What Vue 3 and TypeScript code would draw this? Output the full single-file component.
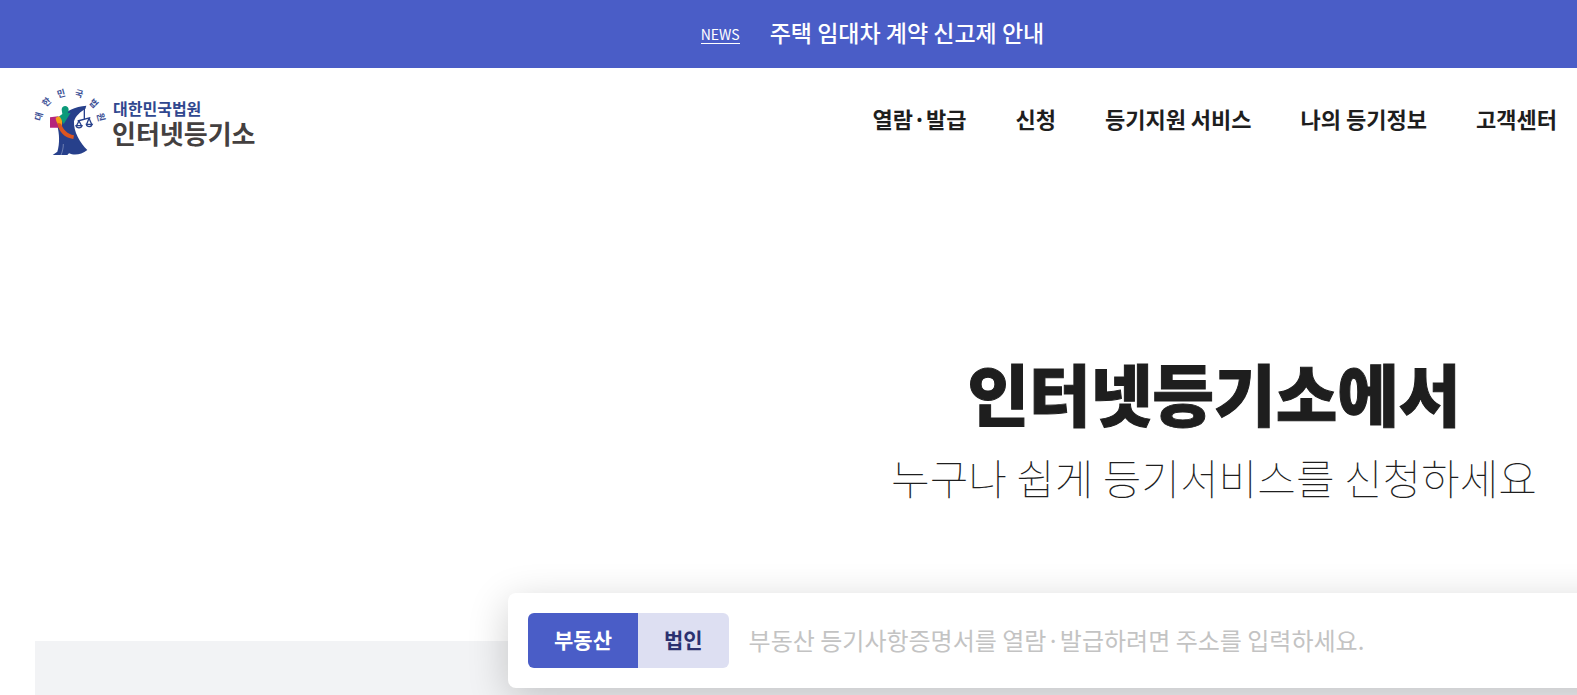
<script setup lang="ts">
import { ref } from 'vue'

interface ArcLetter {
  char: string
  x: number
  y: number
  angle: number
}

const menu: string[] = ['열람·발급', '신청', '등기지원 서비스', '나의 등기정보', '고객센터']

const arcLetters: ArcLetter[] = [
  { char: '대', x: 28, y: 98, angle: -75 },
  { char: '한', x: 51, y: 55, angle: -45 },
  { char: '민', x: 94, y: 30, angle: -15 },
  { char: '국', x: 147, y: 31, angle: 15 },
  { char: '법', x: 190, y: 59, angle: 45 },
  { char: '원', x: 211, y: 100, angle: 75 },
]

const tabs = [
  { id: 'estate', label: '부동산', hint: '부동산 등기사항증명서를 열람·발급하려면 주소를 입력하세요.' },
  { id: 'corp', label: '법인', hint: '법인 등기사항증명서를 열람·발급하려면 상호를 입력하세요.' },
]
const active = ref(0)
const keyword = ref('')
</script>

<template>
  <div class="page">
    <aside class="news">
      <span class="news-tag">NEWS</span>
      <a href="#" class="news-link">주택 임대차 계약 신고제 안내</a>
    </aside>

    <header class="header">
      <a href="#" class="brand">
        <svg class="emblem" viewBox="12 12 216 201" aria-hidden="true">
          <g class="arc">
            <text
              v-for="l in arcLetters"
              :key="l.char"
              :transform="`translate(${l.x} ${l.y}) rotate(${l.angle})`"
              text-anchor="middle"
              dy="8"
            >{{ l.char }}</text>
          </g>
          <path fill="#27408b" d="M90 100 C104 84 136 67 169 65 L166 75 C152 82 136 97 132 112 C130 142 150 178 172 198 C154 213 132 215 117 208 L112 213 L68 213 L82 203 C90 178 88 148 82 126 Z" />
          <path fill="none" stroke="#fff" stroke-width="1" d="M100 180 C100 192 97 204 93 213" />
          <path fill="#0c9a7a" d="M95 77 C95 62 116 62 116 77 C116 82 114 84 113 88 L122 86 L101 120 L92 105 L86 98 L97 90 Z" />
          <path fill="#b5257c" d="M60 100 L85 97 L90 131 L60 131 Z" />
          <path fill="#f5a01a" d="M77 101 L87 97 C98 105 98 120 94 130 C82 122 78 113 77 101 Z" />
          <path fill="#dc5520" d="M82 116 L93 119 C100 138 112 149 132 154 L130 165 C103 161 86 143 82 116 Z" />
          <g fill="none" stroke="#27408b" stroke-width="4">
            <path d="M163 69 L163 107 M143 111 L181 101 M147 111 L139 126 M147 111 L155 126 M177 103 L170 121 M177 103 L185 121" />
            <path d="M138 125 C140 134 154 134 156 125 Z M169 121 C171 130 184 130 187 121 Z" />
          </g>
        </svg>
        <span class="brand-text">
          <span class="brand-org">대한민국법원</span>
          <span class="brand-name">인터넷등기소</span>
        </span>
      </a>
      <nav class="menu">
        <a v-for="item in menu" :key="item" href="#">{{ item }}</a>
      </nav>
    </header>

    <main class="hero">
      <div class="hero-content">
        <h1>인터넷등기소에서</h1>
        <p class="subtitle">누구나 쉽게 등기서비스를 신청하세요</p>
        <form class="search" @submit.prevent>
          <div class="tabs">
            <button
              v-for="(tab, i) in tabs"
              :key="tab.id"
              type="button"
              :class="{ active: active === i }"
              @click="active = i"
            >{{ tab.label }}</button>
          </div>
          <input v-model="keyword" type="text" :aria-label="tabs[active].label" :placeholder="tabs[active].hint" />
        </form>
      </div>
      <div class="backdrop"></div>
    </main>
  </div>
</template>

<style>
body {
  margin: 0;
  background: #fff;
}
</style>

<style scoped>
.page {
  height: 100vh;
  display: flex;
  flex-direction: column;
  overflow: hidden;
  color: #1e1e1e;
  font-family: 'Noto Sans CJK KR', 'Noto Sans', sans-serif;
}

a {
  color: inherit;
  text-decoration: none;
}

.news {
  flex: none;
  display: flex;
  align-items: center;
  justify-content: center;
  gap: 30px;
  height: 68px;
  padding-left: 168px;
  background: #4a5dc7;
  color: #fff;
}

.news-tag {
  font-size: 14px;
  line-height: 18px;
  border-bottom: 1px solid #fff;
}

.news-link {
  padding-bottom: 4px;
  font-size: 23px;
  line-height: 32px;
  font-weight: 500;
}

.header {
  flex: none;
  display: flex;
  align-items: center;
  justify-content: space-between;
  height: 106px;
  padding: 0 20px 0 34px;
}

.brand {
  display: flex;
  align-items: center;
  gap: 6px;
}

.emblem {
  width: 72px;
  height: 67px;
  overflow: visible;
}

.arc {
  fill: #3d5196;
  font-size: 27px;
  font-weight: 700;
}

.brand-text {
  display: flex;
  flex-direction: column;
}

.brand-org {
  padding-left: 1px;
  font-size: 16px;
  line-height: 24px;
  font-weight: 700;
  color: #30478f;
}

.brand-name {
  font-size: 26px;
  line-height: 26px;
  font-weight: 700;
  color: #444040;
}

.menu {
  display: flex;
  gap: 49px;
  padding-bottom: 6px;
  font-size: 22px;
  line-height: 32px;
  font-weight: 700;
  white-space: nowrap;
}

.hero {
  flex: 1;
  display: grid;
  grid-template-rows: 467px 1fr;
}

.hero-content {
  grid-area: 1 / 1 / 3 / 2;
  z-index: 1;
  margin: 168px -343px 0 508px;
  display: flex;
  flex-direction: column;
  align-items: center;
}

.backdrop {
  grid-area: 2 / 1 / 3 / 2;
  margin-left: 35px;
  background: #f2f3f5;
}

h1 {
  margin: 0;
  font-size: 67px;
  line-height: 100px;
  font-weight: 900;
  -webkit-text-stroke: 1px currentColor;
}

.subtitle {
  margin: 4px 0 0;
  font-size: 42px;
  line-height: 62px;
  font-weight: 100;
}

.search {
  align-self: stretch;
  box-sizing: border-box;
  display: flex;
  align-items: center;
  gap: 20px;
  height: 95px;
  margin-top: 85px;
  padding: 20px;
  border-radius: 8px;
  background: #fff;
  box-shadow: 0 10px 40px rgba(0, 0, 0, 0.2);
}

.tabs {
  display: flex;
  border-radius: 6px;
  overflow: hidden;
}

.tabs button {
  height: 55px;
  padding: 0 26px 4px;
  border: 0;
  background: #dddff2;
  color: #2b3170;
  font: 700 21px 'Noto Sans CJK KR', sans-serif;
  cursor: pointer;
}

.tabs button.active {
  background: #4a5dc7;
  color: #fff;
}

input {
  flex: 1;
  box-sizing: border-box;
  min-width: 0;
  height: 55px;
  padding: 0 0 2px;
  border: 0;
  outline: 0;
  background: transparent;
  color: #1e1e1e;
  font: 400 24px 'Noto Sans CJK KR', sans-serif;
}

input::placeholder {
  color: #c3c3c3;
  opacity: 1;
}
</style>
